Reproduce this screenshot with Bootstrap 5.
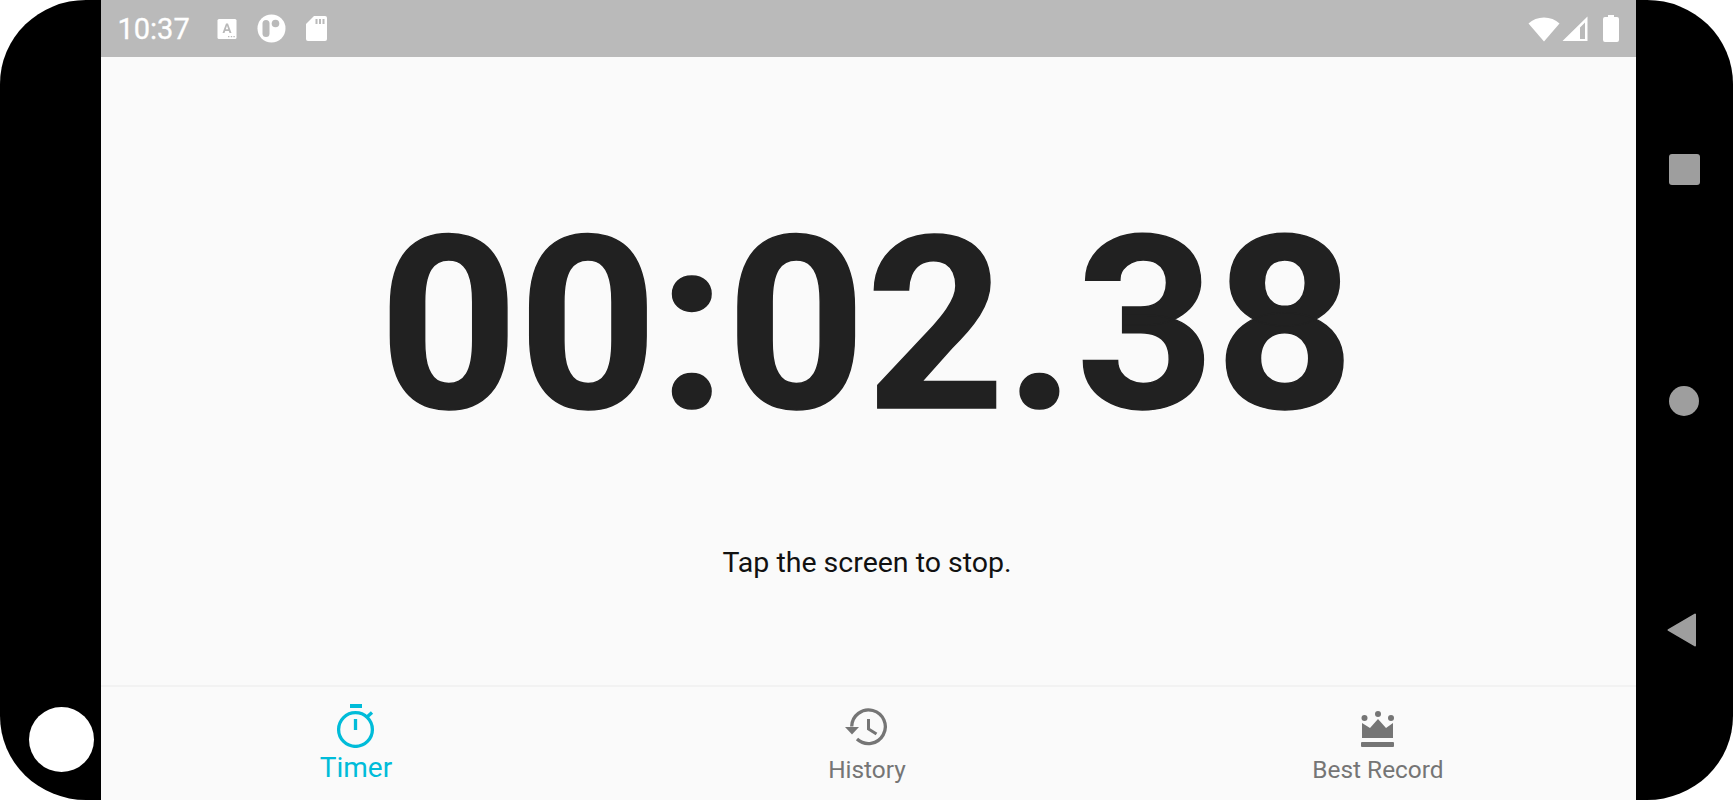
<!DOCTYPE html>
<html lang="en">
<head>
<meta charset="utf-8">
<title>Timer</title>
<link rel="stylesheet" href="https://cdn.jsdelivr.net/npm/bootstrap@5.3.0/dist/css/bootstrap.min.css">
<style>
html,body{height:800px;overflow:hidden;background:#fff;font-family:Roboto,sans-serif}
.phone-frame{width:1733px;height:800px;background:#000;border-radius:86px/84px;overflow:hidden}
.bezel-left{width:100.500px;padding-bottom:28px;padding-left:29px}
.home-dot{width:65px;height:65px;background:#fff;border-radius:50%}
.screen{width:1535px;background:#fafafa}
.bezel-right{width:97.500px;padding-top:154px;padding-left:33.500px}
.soft-square{width:31px;height:31px;background:#9e9e9e;border-radius:3px}
.soft-circle{width:30px;height:30px;background:#9e9e9e;border-radius:50%;margin-top:201px}
.soft-back{width:30px;height:34px;margin-top:197px;margin-left:-2px;display:block}
.status-row{height:57px;background:#bababa;color:#fff;padding-left:17px;padding-right:16.500px}
.clock-text{font-size:29px;line-height:1;width:74px;margin-top:1px;-webkit-text-stroke:.3px #fff}
.status-icons{margin-left:25.500px;gap:20px}
.status-right{gap:2px}
.battery-gap{margin-left:13px}
.timer-area{flex:1 1 auto;min-height:0;padding-right:2px}
.time-big{font-size:242px;font-weight:700;color:#212121;line-height:1;margin-top:147px;letter-spacing:.5px;-webkit-text-stroke:1.500px #212121}
.tap-text{font-size:28.500px;line-height:1.2;color:#111;margin-top:99.500px}
.tab-strip{height:115px;border-top:2px solid #f2f2f2;background:#fafafa;padding-right:2px}
.tab-cell{width:33.333%;color:#757575;font-size:24.400px;line-height:27px;padding-top:16px}
.tab-cell.on{color:#00bcd9;font-size:28px}
.tab-icon{display:block}
.icon-history{margin-top:5px}
.icon-crown{margin-top:8px}
.label-timer{margin-top:6px}
.label-history{margin-top:10px}
.label-best{margin-top:9px}
</style>
</head>
<body>
<div class="phone-frame d-flex">
  <div class="bezel-left d-flex align-items-end flex-shrink-0"><div class="home-dot"></div></div>
  <div class="screen d-flex flex-column flex-shrink-0">
    <div class="status-row d-flex align-items-center justify-content-between">
      <div class="d-flex align-items-center">
        <div class="clock-text">10:37</div>
        <div class="status-icons d-flex align-items-center">
          <svg width="20" height="22" viewBox="0 0 20 22"><rect x="0.500" y="1" width="19" height="20" rx="1.500" fill="#fff"/><path d="M5.500 15 9 5.500h2L14.500 15h-2l-.7-2H8.200l-.7 2zM8.800 11.300h2.400L10 7.800z" fill="#bababa"/><path d="M11 18h1.400v1.300H11zM13.800 18h1.400v1.300h-1.400zM16.400 18h1.400v1.300h-1.400z" fill="#bababa"/></svg>
          <svg width="29" height="29" viewBox="0 0 29 29"><circle cx="14.500" cy="14.500" r="14" fill="#fff"/><rect x="5.500" y="6" width="7" height="17" rx="3.500" fill="#bababa"/><circle cx="18.500" cy="9.500" r="3.800" fill="#bababa"/></svg>
          <svg width="21" height="25" viewBox="0 0 21 25"><path d="M8 0h11a2 2 0 0 1 2 2v21a2 2 0 0 1-2 2H2a2 2 0 0 1-2-2V8z" fill="#fff"/><path d="M9.500 3h2v5h-2zM13 3h2v5h-2zM16.500 3h2v5h-2z" fill="#bababa"/></svg>
        </div>
      </div>
      <div class="status-right d-flex align-items-center">
        <svg width="32" height="26" viewBox="0 0 32 26"><path d="M16 25.500 .5 7.500C4.500 3.500 10 1.500 16 1.500s11.500 2 15.500 6z" fill="#fff"/></svg>
        <svg width="26" height="26" viewBox="0 0 26 26"><path d="M25.500 .500V25H.5zM23 6.500 18 11.500V23H23z" fill="#fff" fill-rule="evenodd"/></svg>
        <svg width="16" height="27" class="battery-gap" viewBox="0 0 16 27"><path d="M5 0h6v2h3a2 2 0 0 1 2 2v21a2 2 0 0 1-2 2H2a2 2 0 0 1-2-2V4a2 2 0 0 1 2-2h3z" fill="#fff"/></svg>
      </div>
    </div>
    <div class="timer-area d-flex flex-column align-items-center">
      <div class="time-big">00:02.38</div>
      <div class="tap-text">Tap the screen to stop.</div>
    </div>
    <div class="tab-strip d-flex flex-shrink-0">
      <div class="tab-cell on d-flex flex-column align-items-center">
        <svg class="tab-icon" width="41" height="45" viewBox="0 0 41 45"><g fill="none" stroke="#00bcd9" stroke-width="3.300"><circle cx="20.500" cy="26.500" r="16.900"/><path d="M15 3h12" stroke-width="4"/><path d="M20.500 16v11"/><path d="M32 14 37 9.500"/></g></svg>
        <span class="label-timer">Timer</span>
      </div>
      <div class="tab-cell d-flex flex-column align-items-center">
        <svg class="tab-icon icon-history" width="44" height="38" viewBox="0 0 44 38"><g fill="none" stroke="#757575" stroke-width="3.300"><path d="M6.700 18.500A16.800 16.800 0 1 1 12 31"/><path d="M23.500 11v10l8 5" stroke-width="3"/></g><path d="M0 19h14l-7 7.500z" fill="#757575"/></svg>
        <span class="label-history">History</span>
      </div>
      <div class="tab-cell d-flex flex-column align-items-center">
        <svg class="tab-icon icon-crown" width="33" height="36" viewBox="0 0 33 36"><circle cx="3.500" cy="7" r="3" fill="#757575"/><circle cx="17" cy="3" r="3" fill="#757575"/><circle cx="30" cy="7" r="3" fill="#757575"/><path d="M1 12 9 17 17 8 25 17 32 12V27H1z" fill="#757575"/><rect x="0" y="31" width="33" height="5" rx="1" fill="#757575"/></svg>
        <span class="label-best">Best Record</span>
      </div>
    </div>
  </div>
  <div class="bezel-right d-flex flex-column align-items-start flex-shrink-0">
    <div class="soft-square"></div>
    <div class="soft-circle"></div>
    <svg class="soft-back" viewBox="0 0 30 34"><path d="M1.500 17 28 1.500V32.500z" fill="#9e9e9e" stroke="#9e9e9e" stroke-width="2" stroke-linejoin="round"/></svg>
  </div>
</div>
<script src="https://cdn.jsdelivr.net/npm/bootstrap@5.3.0/dist/js/bootstrap.bundle.min.js"></script>
</body>
</html>
